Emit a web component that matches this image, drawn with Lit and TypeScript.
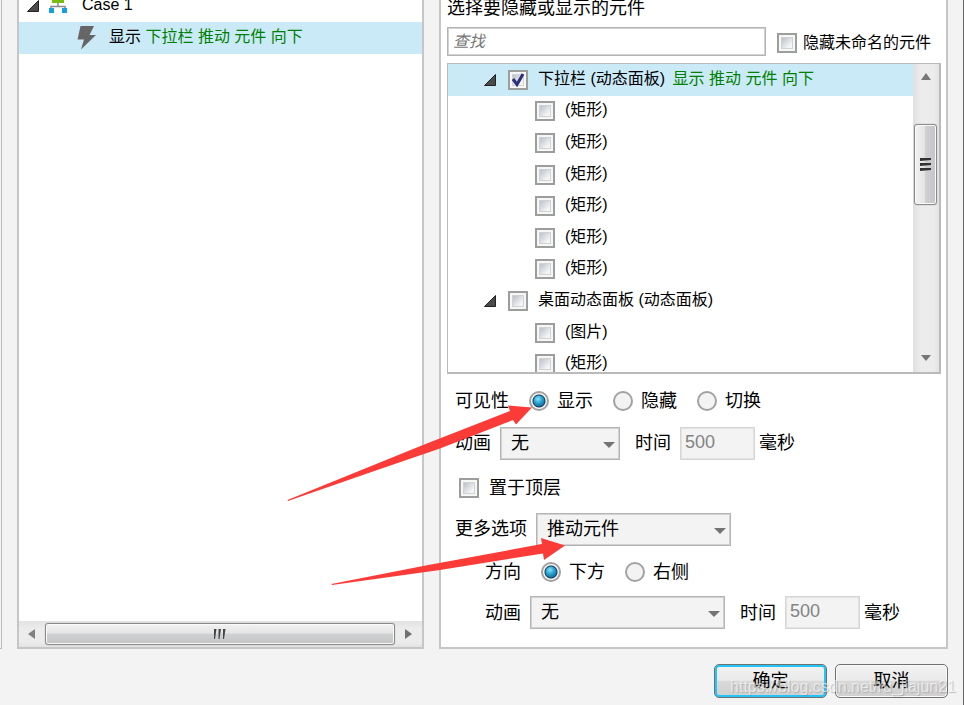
import { LitElement, html, css, nothing } from "lit";
import { customElement, property } from "lit/decorators.js";

interface TreeRow {
  label: string;
  action?: string;
  checked?: boolean;
  parent?: boolean;
}

const ROWS: TreeRow[] = [
  { label: "下拉栏 (动态面板)", action: "显示 推动 元件 向下", checked: true, parent: true },
  { label: "(矩形)" },
  { label: "(矩形)" },
  { label: "(矩形)" },
  { label: "(矩形)" },
  { label: "(矩形)" },
  { label: "(矩形)" },
  { label: "桌面动态面板 (动态面板)", parent: true },
  { label: "(图片)" },
  { label: "(矩形)" },
];

const controls = css`
  * {
    box-sizing: border-box;
  }
  button,
  input,
  select {
    font: inherit;
    margin: 0;
    padding: 0;
    border-radius: 0;
  }
  .check {
    appearance: none;
    flex: none;
    width: 20px;
    height: 20px;
    border: 2px solid #9c9e9c;
    background: linear-gradient(135deg, #bcc0c9, #f4f5f6 80%) center / 10px 10px no-repeat,
      linear-gradient(#d0d2d4, #d0d2d4) center / 12px 12px no-repeat, #f7f7f7;
  }
  .field {
    appearance: none;
    border: 1px solid #b4b4b4;
    box-shadow: inset 0 0 0 1px #d2d2d2;
    background: #fff;
    color: #000;
  }
`;

const twisty = html`<svg class="twisty" width="12" height="12" viewBox="0 0 12 12">
  <path d="M11.5 .5V11.5H.5Z" fill="#4b4b4b" stroke="#222" />
</svg>`;

@customElement("action-tree")
export class ActionTree extends LitElement {
  static styles = [
    controls,
    css`
      :host {
        display: flex;
        flex-direction: column;
        border: 2px solid #c6c6c6;
        border-top: 0;
        background: #fff;
        font-size: 16px;
      }
      .case {
        display: flex;
        align-items: flex-start;
        height: 22px;
        padding-left: 8px;
        line-height: 10px;
      }
      .sitemap {
        margin: 0 14px 0 9px;
      }
      .action {
        display: flex;
        align-items: center;
        height: 32px;
        padding: 0 0 2px 58px;
        gap: 12px;
        background: #cbeaf8;
        white-space: pre;
      }
      .green {
        color: #008000;
      }
      .bar {
        display: flex;
        align-items: center;
        margin-top: auto;
        height: 26px;
        padding: 0 10px 0 9px;
        gap: 10px;
        background: linear-gradient(#e2e2e2, #ececec 30%, #ececec 80%, #e2e2e2);
      }
      .thumb {
        flex: 1;
        display: flex;
        align-items: center;
        justify-content: center;
        height: 22px;
        border: 1px solid #8b8b8b;
        border-radius: 3px;
        box-shadow: inset 0 0 0 1px #fafafa, 0 0 1px #888;
        background: linear-gradient(#f2f2f2, #e4e4e4 46%, #cfd0d1 50%, #c4c5c7);
      }
    `,
  ];

  render() {
    return html`
      <div class="case">
        ${twisty}
        <svg class="sitemap" width="20" height="13" viewBox="0 0 20 13">
          <path d="M3 9V6.5H17V9M10 2V6.5" fill="none" stroke="#8a8a8a" stroke-width="1.5" />
          <path d="M4 -4H16V3H4Z" fill="#76bd0d" />
          <path d="M1 8H6V13H1ZM14 8H19V13H14Z" fill="#14a0dc" />
        </svg>
        <span>Case 1</span>
      </div>
      <div class="action">
        <svg width="20" height="26" viewBox="0 0 20 26">
          <path d="M3.500 2H17L12.500 11H19L4 25.500L7 15.500H.5Z" fill="#666" />
        </svg>
        <span>显示 <span class="green">下拉栏 推动 元件 向下</span></span>
      </div>
      <div class="bar">
        <svg width="7" height="10" viewBox="0 0 7 10"><path d="M7 0V10L0 5Z" fill="#808080" /></svg>
        <div class="thumb">
          <svg width="14" height="12" viewBox="0 0 14 12">
            <path d="M1 1H3.500L2 11H1ZM5.500 1H8L6.500 11H5.500ZM10 1H12.500L11 11H10Z" fill="#444" />
          </svg>
        </div>
        <svg width="7" height="10" viewBox="0 0 7 10"><path d="M0 0V10L7 5Z" fill="#707070" /></svg>
      </div>
    `;
  }
}

@customElement("widget-list")
export class WidgetList extends LitElement {
  @property({ attribute: false }) rows: TreeRow[] = [];

  static styles = [
    controls,
    css`
      :host {
        display: flex;
        height: 311px;
        border: 2px solid #bababa;
        border-width: 1px 2px 2px 1px;
        overflow: hidden;
        font-size: 16px;
      }
      .rows {
        flex: 1;
        display: grid;
        grid-auto-rows: 1fr;
        height: 316px;
      }
      .row {
        display: flex;
        align-items: center;
        gap: 10px;
        padding-left: 87px;
        white-space: nowrap;
      }
      .row.parent {
        padding-left: 36px;
      }
      .row.selected {
        background: #cbeaf8;
      }
      .twisty {
        flex: none;
        margin-right: 2px;
      }
      .row label {
        padding-bottom: 2px;
      }
      .box {
        display: grid;
        flex: none;
      }
      .box > * {
        grid-area: 1 / 1;
      }
      .tick {
        pointer-events: none;
      }
      .green {
        color: #008000;
        margin-left: 3px;
      }
      .bar {
        display: flex;
        flex-direction: column;
        align-items: center;
        width: 26px;
        padding: 9px 2px 11px 1px;
        background: linear-gradient(90deg, #e0e0e0, #ececec 30%, #ececec 80%, #e2e2e2);
      }
      .thumb {
        display: flex;
        align-items: center;
        justify-content: center;
        width: 23px;
        height: 81px;
        margin: 44px 0 auto;
        border: 1px solid #8b8b8b;
        border-radius: 3px;
        box-shadow: inset 0 0 0 1px #fafafa, 0 0 1px #888;
        background: linear-gradient(90deg, #f2f2f2, #e4e4e4 46%, #cfd0d1 50%, #c4c5c7);
      }
    `,
  ];

  render() {
    return html`
      <div class="rows">
        ${this.rows.map(
          (r, i) => html`<div class="row ${r.parent ? "parent" : ""} ${r.action ? "selected" : ""}">
            ${r.parent ? twisty : nothing}
            <span class="box">
              <input class="check" type="checkbox" id="w${i}" .checked=${!!r.checked} />
              ${r.checked
                ? html`<svg class="tick" width="20" height="20" viewBox="0 0 20 20">
                    <path d="M5 9L9 14.5L15 4" fill="none" stroke="#2b2f7d" stroke-width="3" />
                  </svg>`
                : nothing}
            </span>
            <label for="w${i}"
              >${r.label} ${r.action ? html`<span class="green">${r.action}</span>` : nothing}</label
            >
          </div>`
        )}
      </div>
      <div class="bar">
        <svg width="10" height="7" viewBox="0 0 10 7"><path d="M5 0L10 7H0Z" fill="#777" /></svg>
        <div class="thumb">
          <svg width="11" height="13" viewBox="0 0 11 13">
            <path d="M0 0H11V2L0 3ZM0 5H11V7L0 8ZM0 10H11V12L0 13Z" fill="#333" />
          </svg>
        </div>
        <svg width="10" height="6" viewBox="0 0 10 6"><path d="M0 0H10L5 6Z" fill="#777" /></svg>
      </div>
    `;
  }
}

@customElement("app-root")
export class AppRoot extends LitElement {
  static styles = [
    controls,
    css`
      :host {
        display: block;
        position: relative;
        min-height: 100vh;
        overflow: hidden;
        background: #f3f3f3;
        border-right: 1px solid #666;
        color: #000;
        font: 18px/24px "Liberation Sans", "Noto Sans CJK SC", sans-serif;
      }
      .main {
        display: flex;
        gap: 15px;
        padding-right: 15px;
      }
      .edge {
        width: 2px;
        border: 1px solid #bdbdbd;
        border-width: 0 1px 1px 0;
      }
      action-tree {
        flex: 403 1 0;
      }
      .panel {
        flex: 494 1 0;
        min-width: 0;
        padding: 0 5px 18px 6px;
        border: 2px solid #c6c6c6;
        border-top: 0;
        background: #fff;
      }
      .title {
        height: 27px;
        margin: 0;
        font-size: 18px;
        font-weight: 400;
        line-height: 16px;
      }
      .row,
      .row label {
        display: flex;
        align-items: center;
      }
      .find {
        height: 29px;
        margin-bottom: 7px;
        font-size: 16px;
      }
      .search {
        flex: 1;
        min-width: 0;
        height: 29px;
        padding: 0 5px;
        font-style: italic;
      }
      .search::placeholder {
        color: #777;
        opacity: 1;
      }
      .find label {
        gap: 6px;
        padding: 2px 10px 0 11px;
      }
      .options {
        padding: 11px 8px 0;
      }
      .line {
        height: 32px;
        margin-bottom: 11px;
      }
      .tight {
        margin-bottom: 10px;
      }
      .indent {
        margin-left: 30px;
      }
      .line.indent {
        margin-bottom: 8px;
      }
      .radios label {
        gap: 8px;
        margin-left: 20px;
      }
      .radio {
        appearance: none;
        flex: none;
        width: 20px;
        height: 20px;
        border: 2px solid #a2a2a2;
        border-radius: 50%;
        background: #f3f3f3;
      }
      .radio:checked {
        background: radial-gradient(circle, transparent 5px, #17405c 6px, #f5f5f5 7px),
          radial-gradient(circle at 7px 6px, #8fe0f8, #2ba5d4 4px, #0d6a97 8px);
      }
      .top {
        gap: 10px;
        padding: 4px 0 0 4px;
      }
      .pick {
        display: grid;
        align-items: center;
        margin-left: 9px;
        width: 120px;
      }
      .pick > * {
        grid-area: 1 / 1;
      }
      .wide {
        width: 195px;
      }
      .pick select {
        width: 100%;
        height: 33px;
        padding: 0 10px 1px;
        background: #f3f3f3;
      }
      .pick svg {
        justify-self: end;
        margin: 3px 5px 0;
        pointer-events: none;
      }
      .time {
        margin: 0 9px 0 15px;
      }
      .ms {
        width: 75px;
        height: 33px;
        padding: 0 4px 2px;
        border-color: #d6d6d6;
        box-shadow: inset 0 0 0 1px #e2e2e2;
        background: #f3f3f3;
        color: #848484;
      }
      .unit {
        margin-left: 4px;
      }
      .footer {
        display: flex;
        justify-content: flex-end;
        gap: 8px;
        padding: 15px 15px 7px;
      }
      .btn {
        width: 113px;
        height: 34px;
        border: 1px solid #707070;
        border-radius: 5px;
        color: #000;
        box-shadow: inset 0 0 0 1px #fafafa;
        background: linear-gradient(#f3f3f3, #e9e9e9 48%, #d9d9d9 50%, #cfcfcf);
      }
      .default {
        box-shadow: inset 0 0 0 2px #22c5f5;
      }
      .watermark {
        position: absolute;
        right: 7px;
        bottom: 8px;
        font-size: 16px;
        line-height: 20px;
        color: rgba(255, 255, 255, 0.6);
        text-shadow: 1px 1px 1px rgba(120, 120, 120, 0.4);
        pointer-events: none;
      }
      .arrows {
        position: absolute;
        left: 287px;
        top: 401px;
        pointer-events: none;
      }
    `,
  ];

  private time(id: string) {
    return html`<label class="time" for=${id}>时间</label>
      <input class="field ms" id=${id} value="500" disabled />
      <span class="unit">毫秒</span>`;
  }

  private pick(id: string, value: string, wide = false) {
    return html`<span class="pick ${wide ? "wide" : ""}">
      <select class="field" id=${id}>
        <option>${value}</option>
      </select>
      <svg width="12" height="6" viewBox="0 0 12 6"><path d="M0 0H12L6 6Z" fill="#747474" /></svg>
    </span>`;
  }

  private radio(group: string, label: string, checked = false) {
    return html`<label><input class="radio" type="radio" name=${group} ?checked=${checked} />${label}</label>`;
  }

  render() {
    return html`
      <div class="main">
        <div class="edge"></div>
        <action-tree></action-tree>
        <section class="panel">
          <h2 class="title">选择要隐藏或显示的元件</h2>
          <div class="row find">
            <input class="field search" type="text" placeholder="查找" aria-label="查找" />
            <label><input class="check" type="checkbox" />隐藏未命名的元件</label>
          </div>
          <widget-list .rows=${ROWS}></widget-list>
          <div class="options">
            <div class="row line radios tight">
              可见性 ${this.radio("vis", "显示", true)} ${this.radio("vis", "隐藏")} ${this.radio("vis", "切换")}
            </div>
            <div class="row line">
              <label for="anim">动画</label>${this.pick("anim", "无")} ${this.time("t1")}
            </div>
            <div class="row line">
              <label class="top"><input class="check" type="checkbox" />置于顶层</label>
            </div>
            <div class="row line">
              <label for="more">更多选项</label>${this.pick("more", "推动元件", true)}
            </div>
            <div class="row line radios indent">
              方向 ${this.radio("dir", "下方", true)} ${this.radio("dir", "右侧")}
            </div>
            <div class="row indent">
              <label for="anim2">动画</label>${this.pick("anim2", "无", true)} ${this.time("t2")}
            </div>
          </div>
        </section>
      </div>
      <div class="footer">
        <button class="btn default">确定</button>
        <button class="btn">取消</button>
      </div>
      <svg class="arrows" width="280" height="186" viewBox="287 401 280 186">
        <path
          d="M287.5 500L370 466.500L423 445L510 411L508 405.500L532 407.500L516 424.500L513 420L440 448.500L370 472.500L288 501ZM331.500 584L423 566L542 544L541 538L565 545.500L544 560L543 553.500L440 570L332 585Z"
          fill="#fb3b38"
        />
      </svg>
      <div class="watermark">https://blog.csdn.net/ru_jiajun21</div>
    `;
  }
}
